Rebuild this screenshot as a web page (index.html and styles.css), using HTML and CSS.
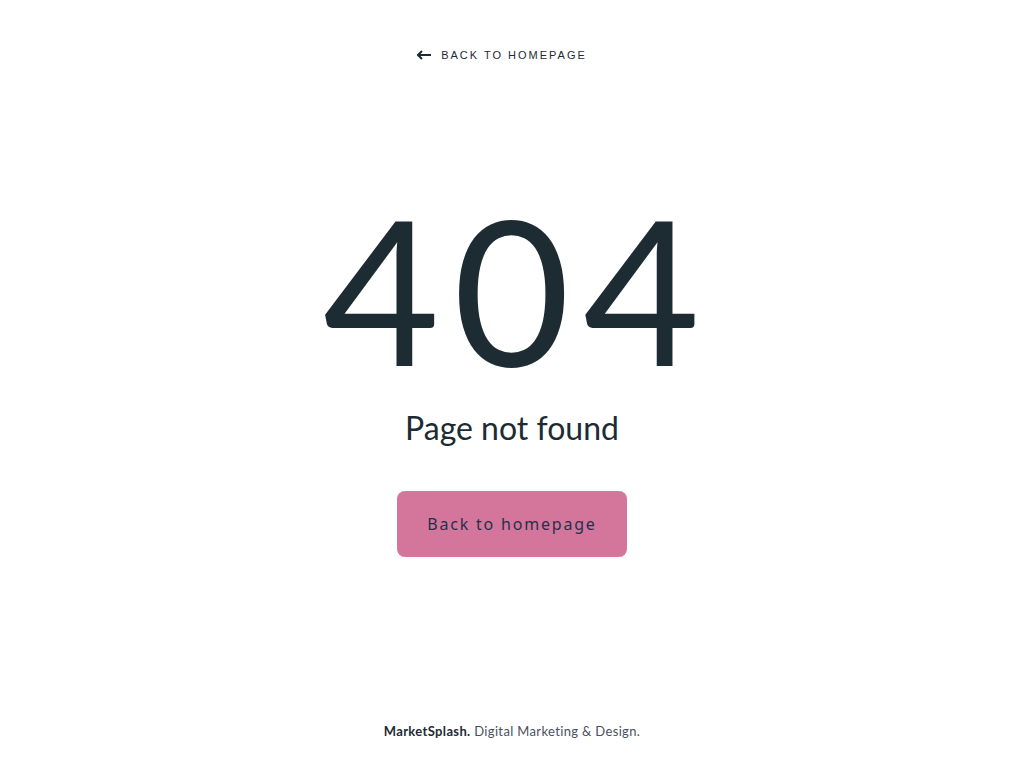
FILE: index.html
```html
<!DOCTYPE html>
<html lang="en">
<head>
<meta charset="utf-8">
<title>404 - Page not found</title>
<link rel="stylesheet" href="styles.css">
</head>
<body>
<div class="page">
  <header class="top">
    <a class="back-link" href="#">
      <svg class="arrow" width="14" height="10" viewBox="0 0 14 10" aria-hidden="true">
        <path d="M5 1 L1 5 L5 9" fill="none" stroke="#1d2b33" stroke-width="2"/>
        <path d="M1 5 H14" stroke="#1d2b33" stroke-width="2"/>
      </svg>
      <span>Back to homepage</span>
    </a>
  </header>
  <main class="main">
    <h1 class="code">404</h1>
    <p class="message">Page not found</p>
    <a class="button" href="#">Back to homepage</a>
  </main>
  <footer class="footer">
    <strong>MarketSplash.</strong> Digital Marketing &amp; Design.
  </footer>
</div>
</body>
</html>
```
FILE: styles.css
```css
* { box-sizing: border-box; }
html, body { margin: 0; padding: 0; background: #fff; }
body {
  font-family: "Lato", "Noto Sans", sans-serif;
  color: #1d2b33;
}
.page {
  height: 768px;
  display: flex;
  flex-direction: column;
  align-items: center;
}
.top {
  padding-top: 49px;
}
.back-link {
  display: flex;
  align-items: center;
  gap: 10px;
  text-decoration: none;
  color: #1d2b33;
  font-family: "Liberation Sans", Arial, sans-serif;
  font-size: 11px;
  letter-spacing: 2px;
  text-transform: uppercase;
  margin-left: -20px;
}
.arrow { display: block; }
.main {
  display: flex;
  flex-direction: column;
  align-items: center;
  margin-top: 114px;
}
.code {
  margin: 0;
  padding-left: 12px;
  font-family: "Lato", sans-serif;
  font-weight: 400;
  font-size: 202px;
  line-height: 226px;
  letter-spacing: 13px;
  color: #1d2b33;
}
.message {
  margin: 7px 0 0;
  font-size: 32px;
  font-weight: 400;
  line-height: 40px;
  color: #1d2b33;
}
.button {
  margin-top: 43px;
  width: 230px;
  height: 66px;
  display: flex;
  align-items: center;
  justify-content: center;
  background: #d4769c;
  border-radius: 8px;
  text-decoration: none;
  color: #25304a;
  font-family: "Noto Sans", sans-serif;
  font-size: 16px;
  letter-spacing: 1.8px;
}
.footer {
  margin-top: auto;
  padding-bottom: 29px;
  font-size: 13px;
  color: #4a4f5e;
  letter-spacing: 0.35px;
}
.footer strong { color: #1d2b33; font-weight: 700; }
```
